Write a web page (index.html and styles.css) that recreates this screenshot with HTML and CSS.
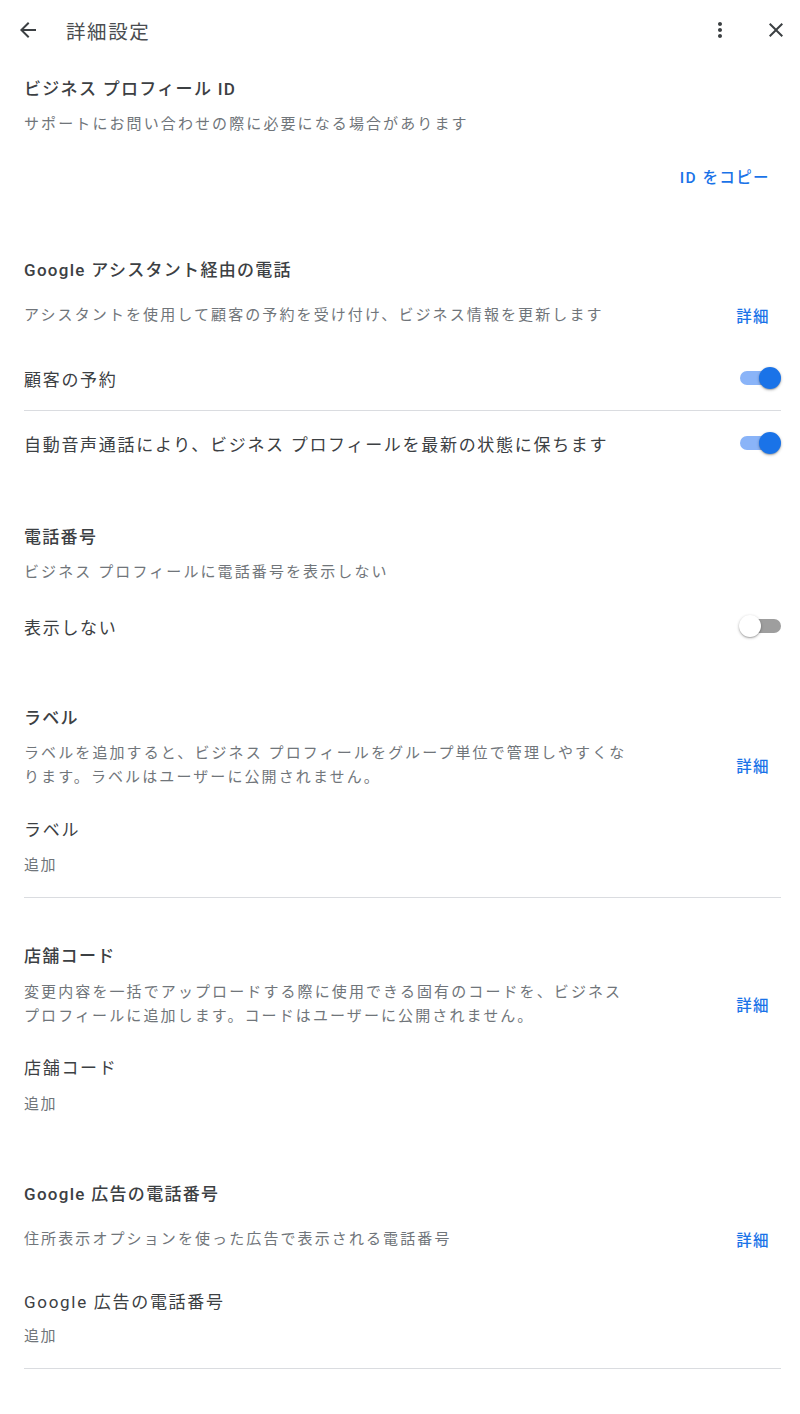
FILE: index.html
```html
<!DOCTYPE html>
<html lang="ja">
<head>
<meta charset="utf-8">
<title>詳細設定</title>
<link rel="stylesheet" href="styles.css">
</head>
<body>
<header class="topbar">
  <button class="icon-btn back" aria-label="戻る">
    <svg viewBox="0 0 24 24" width="24" height="24"><path d="M20 11H7.83l5.59-5.59L12 4l-8 8 8 8 1.41-1.41L7.83 13H20v-2z"/></svg>
  </button>
  <h1 class="title">詳細設定</h1>
  <div class="top-actions">
    <button class="icon-btn" aria-label="その他">
      <svg viewBox="0 0 24 24" width="24" height="24"><path d="M12 8c1.1 0 2-.9 2-2s-.9-2-2-2-2 .9-2 2 .9 2 2 2zm0 2c-1.1 0-2 .9-2 2s.9 2 2 2 2-.9 2-2-.9-2-2-2zm0 6c-1.1 0-2 .9-2 2s.9 2 2 2 2-.9 2-2-.9-2-2-2z"/></svg>
    </button>
    <button class="icon-btn" aria-label="閉じる">
      <svg viewBox="0 0 24 24" width="24" height="24"><path d="M19 6.41L17.59 5 12 10.59 6.41 5 5 6.41 10.59 12 5 17.59 6.41 19 12 13.41 17.59 19 19 17.59 13.41 12z"/></svg>
    </button>
  </div>
</header>

<main class="content">
  <!-- Business Profile ID -->
  <section class="section s-id">
    <div class="sec-title">ビジネス プロフィール ID</div>
    <div class="desc d-id">サポートにお問い合わせの際に必要になる場合があります</div>
    <div class="action-row"><a class="link">ID をコピー</a></div>
  </section>

  <!-- Assistant -->
  <section class="section s-assist">
    <div class="sec-title">Google アシスタント経由の電話</div>
    <div class="desc-row r-assist">
      <div class="desc">アシスタントを使用して顧客の予約を受け付け、ビジネス情報を更新します</div>
      <a class="link">詳細</a>
    </div>
    <div class="toggle-row r-booking">
      <span class="item-title">顧客の予約</span>
      <span class="switch on"><span class="track"></span><span class="thumb"></span></span>
    </div>
    <div class="divider"></div>
    <div class="toggle-row">
      <span class="item-title">自動音声通話により、ビジネス プロフィールを最新の状態に保ちます</span>
      <span class="switch on"><span class="track"></span><span class="thumb"></span></span>
    </div>
  </section>

  <!-- Phone -->
  <section class="section s-phone">
    <div class="sec-title">電話番号</div>
    <div class="desc d-phone">ビジネス プロフィールに電話番号を表示しない</div>
    <div class="toggle-row r-hide">
      <span class="item-title">表示しない</span>
      <span class="switch off"><span class="track"></span><span class="thumb"></span></span>
    </div>
  </section>

  <!-- Labels -->
  <section class="section s-label">
    <div class="sec-title">ラベル</div>
    <div class="desc-row multi r-label">
      <div class="desc">ラベルを追加すると、ビジネス プロフィールをグループ単位で管理しやすくな<br>ります。ラベルはユーザーに公開されません。</div>
      <a class="link">詳細</a>
    </div>
    <div class="item-title field-title f-label">ラベル</div>
    <div class="value">追加</div>
    <div class="divider d-after"></div>
  </section>

  <!-- Store code -->
  <section class="section s-store">
    <div class="sec-title">店舗コード</div>
    <div class="desc-row multi r-store">
      <div class="desc">変更内容を一括でアップロードする際に使用できる固有のコードを、ビジネス<br>プロフィールに追加します。コードはユーザーに公開されません。</div>
      <a class="link">詳細</a>
    </div>
    <div class="item-title field-title f-store">店舗コード</div>
    <div class="value v-store">追加</div>
  </section>

  <!-- Google Ads phone -->
  <section class="section s-ads">
    <div class="sec-title">Google 広告の電話番号</div>
    <div class="desc-row r-ads">
      <div class="desc">住所表示オプションを使った広告で表示される電話番号</div>
      <a class="link">詳細</a>
    </div>
    <div class="item-title field-title f-ads">Google 広告の電話番号</div>
    <div class="value v-ads">追加</div>
    <div class="divider d-after"></div>
  </section>
</main>
</body>
</html>
```

FILE: styles.css
```css
* { box-sizing: border-box; }

html, body {
  margin: 0;
  padding: 0;
  background: #ffffff;
}

body {
  width: 800px;
  font-family: "Roboto", "Noto Sans CJK JP", sans-serif;
  color: #3c4043;
}

/* ---------- Top bar ---------- */
.topbar {
  height: 60px;
  display: flex;
  align-items: center;
  padding: 0 12px 0 16px;
}

.icon-btn {
  width: 24px;
  height: 24px;
  padding: 0;
  border: 0;
  background: none;
  display: flex;
  align-items: center;
  justify-content: center;
  fill: #3c4043;
}

.title {
  margin: 0 0 0 26px;
  font-size: 19.5px;
  font-weight: 400;
  letter-spacing: 1.6px;
  color: #4a4d51;
  flex: 1;
}

.top-actions {
  display: flex;
  align-items: center;
  gap: 32px;
}

/* ---------- Content ---------- */
.content {
  padding: 0 19px 0 24px;
}

.sec-title,
.item-title,
.value,
.desc,
.link {
  white-space: nowrap;
}

.sec-title {
  height: 28px;
  line-height: 28px;
  font-size: 17px;
  font-weight: 500;
  letter-spacing: 1.3px;
  color: #3c4043;
}

.item-title {
  font-size: 17px;
  font-weight: 400;
  letter-spacing: 1.7px;
  color: #3c4043;
}

.field-title {
  display: block;
  height: 28px;
  line-height: 28px;
}

.desc {
  font-size: 15px;
  line-height: 28px;
  letter-spacing: 2.1px;
  color: #70757a;
}

.value {
  height: 28px;
  line-height: 28px;
  font-size: 15px;
  letter-spacing: 1.6px;
  color: #70757a;
  margin-top: 7px;
}

.link {
  font-size: 15.5px;
  font-weight: 500;
  letter-spacing: 1.4px;
  color: #1a73e8;
  cursor: pointer;
  margin-right: 11px;
}

.divider {
  height: 1px;
  background: #dadce0;
}

/* section spacing */
.s-id { margin-top: 15px; }
.s-id .d-id { margin-top: 7px; height: 28px; }

.action-row {
  margin-top: 26px;
  height: 28px;
  line-height: 28px;
  display: flex;
  justify-content: flex-end;
}

.s-assist { margin-top: 64px; }

.desc-row {
  display: flex;
  align-items: center;
  justify-content: space-between;
  height: 28px;
}

.desc-row.multi {
  height: auto;
}

.desc-row.multi .desc {
  line-height: 24px;
}

.r-assist { margin-top: 17px; }

.toggle-row {
  height: 64px;
  display: flex;
  align-items: center;
  justify-content: space-between;
}

.r-booking { margin-top: 17px; }

/* switch */
.switch {
  position: relative;
  width: 42px;
  height: 22px;
  flex: none;
}

.switch .track {
  position: absolute;
  left: 1px;
  right: 3px;
  top: 4px;
  height: 14px;
  border-radius: 7px;
}

.switch .thumb {
  position: absolute;
  top: 0;
  width: 22px;
  height: 22px;
  border-radius: 50%;
  box-shadow: 0 1px 3px rgba(0, 0, 0, 0.3), 0 1px 1px rgba(0, 0, 0, 0.14);
}

.switch.on .track { background: #8ab4f8; }
.switch.on .thumb { right: 0; background: #1a73e8; }

.switch.off .track { background: #9e9e9e; left: 6px; right: 0; }
.switch.off .thumb { left: 0; background: #ffffff; }

.s-phone { margin-top: 48px; }
.s-phone .d-phone { margin-top: 7px; height: 28px; }
.r-hide { margin-top: 8px; }

.s-label { margin-top: 46px; }
.r-label { margin-top: 9px; }
.f-label { margin-top: 27px; }

.d-after { margin-top: 18px; }

.s-store { margin-top: 44px; }
.r-store { margin-top: 10px; }
.f-store { margin-top: 26px; }
.v-store { margin-top: 8px; }

.s-ads { margin-top: 62px; }
.r-ads { margin-top: 17px; }
.f-ads { margin-top: 35px; }
.v-ads { margin-top: 6px; }
```
